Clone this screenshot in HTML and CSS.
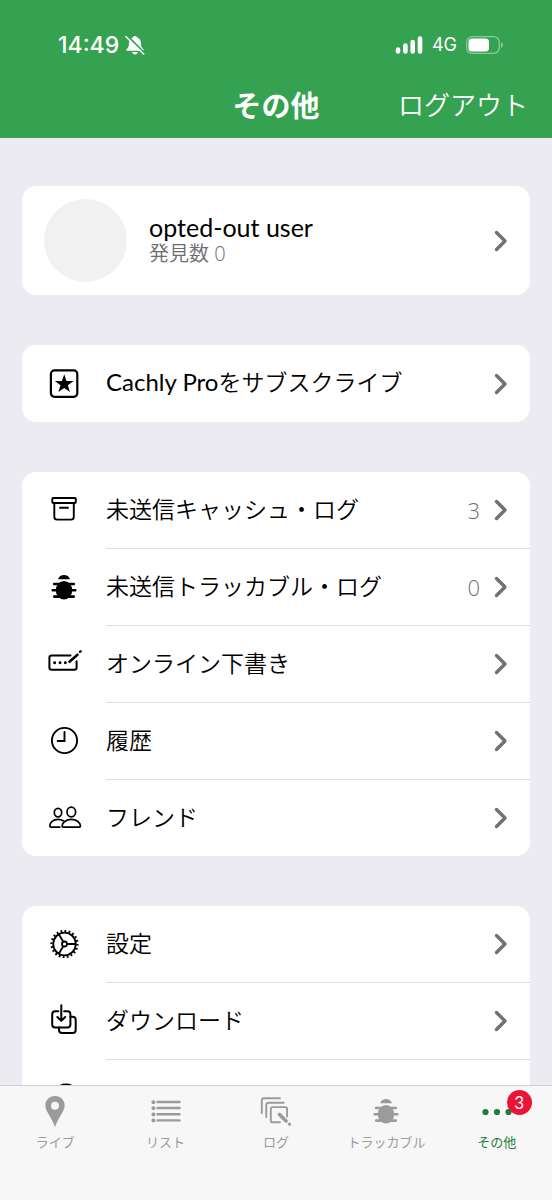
FILE: index.html
```html
<!DOCTYPE html>
<html lang="ja">
<head>
<meta charset="utf-8">
<meta name="viewport" content="width=device-width, initial-scale=1">
<title>その他</title>
<link rel="stylesheet" href="styles.css">
</head>
<body>
<svg class="defs" aria-hidden="true">
  <symbol id="chevron" viewBox="0 0 14 22"><path d="M2.500 2.500 11 11l-8.500 8.500" fill="none" stroke="currentColor" stroke-width="3.400" stroke-linecap="round" stroke-linejoin="round"/></symbol>
  <symbol id="bug" viewBox="0 0 26 26">
    <path d="M7 5.300C8 2.300 10.300 1 13 1s5 1.300 6 4.300Z" fill="currentColor"/>
    <ellipse cx="13" cy="16.200" rx="8.200" ry="9.200" fill="currentColor"/>
    <path d="M3.200 10h19.600M1.700 16.300h22.600M3.200 22.600h19.600" stroke="currentColor" stroke-width="2.600" stroke-linecap="round"/>
  </symbol>
</svg>
<header class="header">
  <div class="status">
    <div class="status-group">
      <span class="time">14:49</span>
      <svg class="bell" viewBox="0 0 20 20" aria-hidden="true">
        <path d="M10 1c-1.300 0-1.900.7-2.100 1.600C5 3.500 4 5.700 4 8.300c0 3.500-1 4.700-2.200 5.700-.9.800-.5 1.700.6 1.700h15.200c1.100 0 1.500-.9.600-1.700C17 13 16 11.800 16 8.300c0-2.600-1-4.800-3.900-5.700C11.900 1.700 11.300 1 10 1ZM7 17c.4 1.500 1.500 2.400 3 2.400s2.600-.9 3-2.400Z" fill="#fff"/>
        <path d="m2.600 1 17 17" stroke="#34a250" stroke-width="1.800"/>
        <path d="m1 1.800 17.700 17.200" stroke="#fff" stroke-width="1.600" stroke-linecap="round"/>
      </svg>
    </div>
    <div class="status-group status-right">
      <svg class="signal" viewBox="0 0 28 18" aria-hidden="true"><path d="M3 13.500v2M10.400 9.500v6M17.700 6v9.500M25 2.500v13" stroke="#fff" stroke-width="4.600" stroke-linecap="round"/></svg>
      <span class="network">4G</span>
      <svg class="battery" viewBox="0 0 38 18" aria-hidden="true"><rect x=".7" y=".7" width="32.600" height="16.600" rx="5.500" fill="none" stroke="#8dcb9c" stroke-width="1.300"/><rect x="2.500" y="2.500" width="20.500" height="13" rx="3.500" fill="#fff"/><path d="M35 6.300c2.600 1 2.600 4.400 0 5.400Z" fill="#8dcb9c"/></svg>
    </div>
  </div>
  <div class="navbar">
    <h1 class="title">その他</h1>
    <button class="logout" type="button">ログアウト</button>
  </div>
</header>

<main class="content">
  <section class="card">
    <a class="profile" href="#profile">
      <span class="avatar"></span>
      <span class="profile-text"><span class="name">opted-out user</span><span class="finds">発見数 0</span></span>
      <svg class="chevron" aria-hidden="true"><use href="#chevron"/></svg>
    </a>
  </section>

  <section class="card">
    <a class="row row-single" href="#pro">
      <svg class="icon" viewBox="0 0 36 36" aria-hidden="true"><rect x="4.900" y="4.400" width="26.400" height="26.400" rx="3.500" fill="none" stroke="#000" stroke-width="2.200"/><path d="m18.200 8.300 2.300 6.700h7.100l-5.700 4.200 2.100 6.900-5.800-4.100-5.800 4.100 2.100-6.900L8.800 15h7.100Z"/></svg>
      <span class="row-body"><span class="label"><span class="latin">Cachly Pro</span>をサブスクライブ</span><svg class="chevron" aria-hidden="true"><use href="#chevron"/></svg></span>
    </a>
  </section>

  <nav class="card">
    <a class="row" href="#unsent">
      <svg class="icon" viewBox="0 0 36 36" fill="none" stroke="#000" stroke-width="1.900" stroke-linecap="round" stroke-linejoin="round" aria-hidden="true"><rect x="6.300" y="6" width="23.500" height="5" rx="1"/><path d="M8.300 11v13.700c0 1.900 1 2.900 2.900 2.900h13.700c1.900 0 2.900-1 2.900-2.900V11M14 15.800h8"/></svg>
      <span class="row-body"><span class="label">未送信キャッシュ・ログ</span><span class="count">3</span><svg class="chevron" aria-hidden="true"><use href="#chevron"/></svg></span>
    </a>
    <a class="row" href="#trackable-log">
      <svg class="icon icon-bug" aria-hidden="true"><use href="#bug"/></svg>
      <span class="row-body"><span class="label">未送信トラッカブル・ログ</span><span class="count">0</span><svg class="chevron" aria-hidden="true"><use href="#chevron"/></svg></span>
    </a>
    <a class="row" href="#drafts">
      <svg class="icon" viewBox="0 0 36 36" fill="none" stroke="#000" stroke-width="2" stroke-linecap="round" stroke-linejoin="round" aria-hidden="true"><path d="M24.500 9.500H5.700c-1.400 0-2.300.9-2.300 2.300v9.600c0 1.400.9 2.300 2.300 2.300h22.600c1.400 0 2.300-.9 2.300-2.300v-6.200"/><path d="M8.600 16.700h.1M14 16.700h.1M19.300 16.700h.1" stroke-width="2.900"/><path d="m23.500 15.800 8-7.100" stroke-width="2.500"/><path d="m34 5.800.6-.5" stroke-width="2.400"/></svg>
      <span class="row-body"><span class="label">オンライン下書き</span><svg class="chevron" aria-hidden="true"><use href="#chevron"/></svg></span>
    </a>
    <a class="row" href="#history">
      <svg class="icon" viewBox="0 0 36 36" fill="none" stroke="#000" stroke-width="1.900" stroke-linecap="round" aria-hidden="true"><circle cx="18.500" cy="17.500" r="12.600"/><path d="M18.500 9v9h-6.800"/></svg>
      <span class="row-body"><span class="label">履歴</span><svg class="chevron" aria-hidden="true"><use href="#chevron"/></svg></span>
    </a>
    <a class="row" href="#friends">
      <svg class="icon" viewBox="0 0 36 36" fill="none" stroke="#000" stroke-width="1.700" stroke-linecap="round" stroke-linejoin="round" aria-hidden="true"><ellipse cx="12" cy="12.600" rx="3.700" ry="4.200"/><ellipse cx="25.300" cy="12" rx="4.300" ry="4.900"/><path d="M17.200 20.800c-1.500-.9-3.200-1.400-5.200-1.400-4.800 0-8.200 3.200-8.200 6.500 0 .8.400 1.200 1.200 1.200h8.800"/><path d="M25.300 19.400c-5.200 0-9.200 3.400-9.200 6.500 0 .8.400 1.200 1.300 1.200h15.800c.9 0 1.300-.4 1.300-1.200 0-3.100-4-6.500-9.200-6.500Z"/></svg>
      <span class="row-body"><span class="label">フレンド</span><svg class="chevron" aria-hidden="true"><use href="#chevron"/></svg></span>
    </a>
  </nav>

  <nav class="card">
    <a class="row" href="#settings">
      <svg class="icon" viewBox="0 0 36 36" fill="none" stroke="#000" stroke-width="1.800" aria-hidden="true"><circle cx="18.500" cy="18" r="11.300"/><circle cx="18.500" cy="18" r="13" stroke-width="2.200" pathLength="60" stroke-dasharray="1.300 1.700"/><circle cx="18.500" cy="18" r="2.500"/><path d="M21 18h8.800M17.250 15.800l-4.400-7.600M17.250 20.200l-4.400 7.600"/></svg>
      <span class="row-body"><span class="label">設定</span><svg class="chevron" aria-hidden="true"><use href="#chevron"/></svg></span>
    </a>
    <a class="row" href="#downloads">
      <svg class="icon" viewBox="0 0 36 36" fill="none" stroke="#000" stroke-width="2" stroke-linecap="round" stroke-linejoin="round" aria-hidden="true"><path d="M12.300 8.200H9.200c-2 0-3 1-3 3v10.300c0 2 1 3 3 3h12.200c2 0 3-1 3-3V11.200c0-2-1-3-3-3h-3.200M15.300 2.300v15.500M11.400 14l3.900 3.900 3.900-3.900"/><path d="M24.500 13.800h2.200c2 0 3 1 3 3V27c0 2-1 3-3 3H16c-2 0-3-1-3-3v-2.500"/></svg>
      <span class="row-body"><span class="label">ダウンロード</span><svg class="chevron" aria-hidden="true"><use href="#chevron"/></svg></span>
    </a>
    <a class="row" href="#support">
      <svg class="icon" viewBox="0 0 36 36" fill="none" stroke="#000" stroke-width="1.900" stroke-linecap="round" aria-hidden="true"><circle cx="20" cy="17.500" r="13"/><path d="M20 16v8M20 11v.1"/></svg>
      <span class="row-body"><span class="label">フィードバック・サポート</span><svg class="chevron" aria-hidden="true"><use href="#chevron"/></svg></span>
    </a>
  </nav>
</main>

<nav class="tabs">
  <a class="tab" href="#live">
    <svg class="tab-icon" viewBox="0 0 34 34" aria-hidden="true"><path fill="currentColor" fill-rule="evenodd" d="M17 2C11.400 2 7.300 6.200 7.300 11.500c0 5.600 6.200 11.500 9.200 20.600.2.600.8.600 1 0 3-9.100 9.200-15 9.200-20.600C26.700 6.200 22.600 2 17 2Zm0 5.700a4 4 0 1 1 0 8 4 4 0 0 1 0-8Z"/></svg>
    <span>ライブ</span>
  </a>
  <a class="tab" href="#list">
    <svg class="tab-icon" viewBox="0 0 34 34" fill="none" stroke="currentColor" stroke-linecap="round" aria-hidden="true"><path stroke-width="2.400" d="M8.500 8h22M8.500 14h22M8.500 20.200h22M8.500 26.400h22"/><path stroke-width="3" stroke-linejoin="round" d="M4 7.700h.8v.8H4ZM4 13.700h.8v.8H4ZM4 19.900h.8v.8H4ZM4 26h.8v.8H4Z"/></svg>
    <span>リスト</span>
  </a>
  <a class="tab" href="#log">
    <svg class="tab-icon" viewBox="0 0 34 34" fill="none" stroke="currentColor" stroke-width="1.900" stroke-linecap="round" stroke-linejoin="round" aria-hidden="true"><path d="M2.800 19V6.500c0-1.500.8-2.200 2.200-2.200H21"/><path d="M7.300 23V11c0-1.500.8-2.200 2.200-2.200h15.300"/><path d="M21 28.300h-7.300c-1.200 0-1.900-.7-1.900-1.900V15c0-1.200.7-1.900 1.900-1.900h12.500c1.200 0 1.900.7 1.900 1.900v7.500"/><path d="m20.500 20.500 6.600 6.600" stroke-width="3.600"/><path d="m30.300 30 .3.300" stroke-width="3"/></svg>
    <span>ログ</span>
  </a>
  <a class="tab" href="#trackable">
    <svg class="tab-icon tab-bug" aria-hidden="true"><use href="#bug"/></svg>
    <span>トラッカブル</span>
  </a>
  <a class="tab active" href="#more" aria-current="page">
    <svg class="tab-icon" viewBox="0 0 34 34" fill="currentColor" aria-hidden="true"><circle cx="5.500" cy="18" r="3.100"/><circle cx="17" cy="18" r="3.100"/><circle cx="28.500" cy="18" r="3.100"/></svg>
    <span>その他</span>
    <span class="badge">3</span>
  </a>
</nav>
</body>
</html>
```
FILE: styles.css
```css
* { box-sizing: border-box; }

body {
  margin: 0;
  height: 100vh;
  display: flex;
  flex-direction: column;
  background: #ebebf1;
  color: #000;
  font-family: Lato, "Noto Sans CJK JP", sans-serif;
}

a { color: inherit; text-decoration: none; }
svg { display: block; flex: none; }
.defs { position: absolute; width: 0; height: 0; }

.header {
  flex: none;
  padding: 30px 24px 0 58px;
  background: #34a250;
  color: #fff;
}

.status,
.status-group { display: flex; align-items: center; }
.status { justify-content: space-between; height: 30px; }
.status-group { gap: 6px; }
.status-right { gap: 9px; padding-right: 24px; }
.time { font: 500 23px/30px Inter, sans-serif; }
.network { font: 400 18px/30px Inter, sans-serif; }
.bell { width: 20px; height: 20px; }
.signal { width: 28px; height: 18px; }
.battery { width: 38px; height: 18px; }

.navbar {
  display: grid;
  grid-template-columns: 1fr auto 1fr;
  align-items: center;
  height: 78px;
  margin-left: -34px;
  padding-top: 10px;
}
.title {
  grid-column: 2;
  margin: 0;
  font: 700 29px/40px "Noto Sans CJK JP", sans-serif;
}
.logout {
  justify-self: end;
  padding: 0;
  border: 0;
  background: none;
  color: #fff;
  font: 350 26px/40px "Noto Sans CJK JP", sans-serif;
}

.content {
  flex: 1;
  min-height: 0;
  display: flex;
  flex-direction: column;
  gap: 50px;
  padding: 48px 22px;
  overflow-y: auto;
  scrollbar-width: none;
}
.card {
  flex: none;
  border-radius: 14px;
  background: #fff;
}

.profile {
  display: flex;
  align-items: center;
  gap: 22px;
  padding: 13px 22px;
}
.avatar { width: 83px; height: 83px; border-radius: 50%; background: #f1f1f1; }
.profile-text { flex: 1; display: flex; flex-direction: column; padding-bottom: 2px; }
.name { font-size: 25px; line-height: 28px; }
.finds {
  font: 350 20px/26px "Open Sans", "Noto Sans CJK JP", sans-serif;
  color: #6d6d70;
}
.chevron { width: 14px; height: 22px; color: #717174; }

.row { display: flex; align-items: center; padding-left: 24px; }
.icon { width: 36px; height: 36px; margin-right: 24px; }
.icon-bug { padding: 5px; }
.row-body {
  flex: 1;
  display: flex;
  align-items: center;
  gap: 14px;
  height: 76px;
  padding-right: 22px;
}
.row + .row .row-body,
.row-single .row-body { height: 77px; }
.row + .row .row-body { border-top: 1px solid #dedee0; }
.label {
  flex: 1;
  padding-bottom: 4px;
  font: 350 23px/32px "Noto Sans CJK JP", sans-serif;
}
.latin { font: 400 24px/32px Lato, sans-serif; }
.count {
  font: 300 22px/32px "Open Sans", sans-serif;
  color: #717174;
}

.tabs {
  flex: none;
  display: grid;
  grid-template-columns: repeat(5, 1fr);
  height: 115px;
  padding-top: 8px;
  border-top: 1px solid #cfcfd1;
  background: #f7f7f7;
}
.tab {
  position: relative;
  display: flex;
  flex-direction: column;
  align-items: center;
  gap: 4px;
  color: #9b9b9b;
  font-family: "Noto Sans CJK JP", sans-serif;
  font-size: 13px;
  line-height: 20px;
}
.tab-icon { width: 34px; height: 34px; }
.tab-bug { padding: 4px; }
.active { color: #1b7f38; }
.badge {
  position: absolute;
  top: -4px;
  left: calc(50% + 10px);
  width: 25px;
  height: 25px;
  border-radius: 50%;
  background: #ec1334;
  color: #fff;
  font: 400 17px/25px Lato, sans-serif;
  text-align: center;
}
```
